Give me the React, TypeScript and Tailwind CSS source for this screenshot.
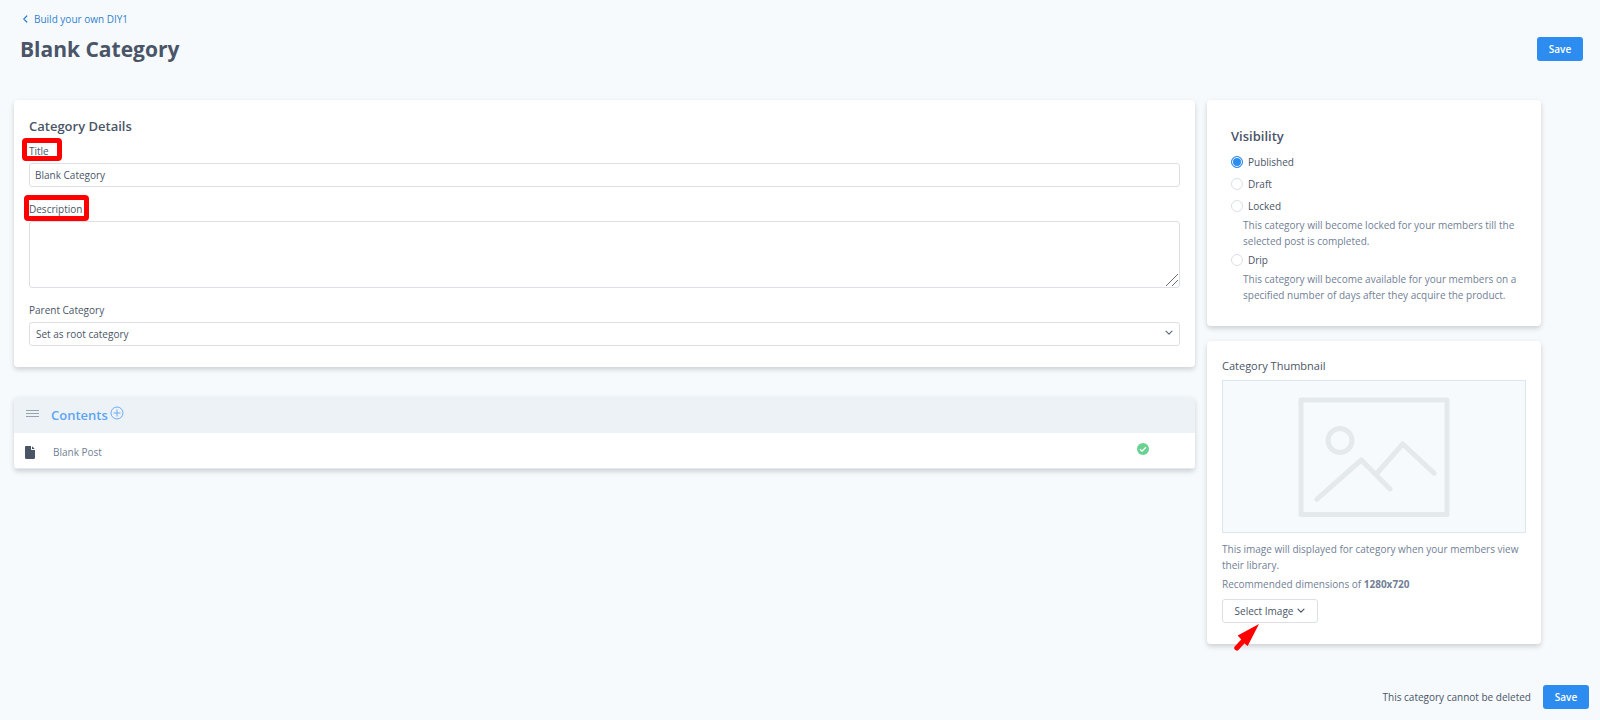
import { useState, type ReactNode } from "react";

const VISIBILITY = [
  { value: "published", label: "Published" },
  { value: "draft", label: "Draft" },
  {
    value: "locked",
    label: "Locked",
    hint: "This category will become locked for your members till the selected post is completed.",
  },
  {
    value: "drip",
    label: "Drip",
    hint: "This category will become available for your members on a specified number of days after they acquire the product.",
  },
];

const SaveButton = () => (
  <button
    type="button"
    className="h-6 w-[46px] rounded-[3px] bg-[#2d8cf0] text-[10px] font-semibold text-white hover:bg-[#2b7fd8]"
  >
    Save
  </button>
);

const Chevron = ({ className }: { className?: string }) => (
  <svg viewBox="0 0 8 6" className={className} fill="none" stroke="currentColor" strokeLinecap="round" strokeLinejoin="round">
    <path d="M1 1.2 4 4.2 7 1.2" strokeWidth={1.2} />
  </svg>
);

const Card = ({ className, children }: { className?: string; children: ReactNode }) => (
  <section
    className={`rounded bg-white shadow-[0_3px_5px_rgba(0,0,0,0.12),0_1px_6px_rgba(0,0,0,0.05)] ${className ?? ""}`}
  >
    {children}
  </section>
);

const CategoryDetails = () => {
  const [title, setTitle] = useState("Blank Category");

  return (
    <Card className="px-[15px] pt-4 pb-[21px]">
      <h2 className="mb-[5px] text-[13px] leading-5 font-semibold">Category Details</h2>

      <div className="mb-3 flex flex-col gap-0.5">
        <label htmlFor="title" className="relative self-start leading-5">
          Title
          <span className="absolute top-[-3px] left-[-7px] h-[23px] w-10 rounded-sm border-5 border-[#ff0000]" />
        </label>
        <input
          id="title"
          value={title}
          onChange={(e) => setTitle(e.target.value)}
          className="h-6 w-full rounded-[3px] border border-[#dcdfe6] bg-white px-[5px] outline-none"
        />
      </div>

      <div className="mb-3 flex flex-col gap-0.5">
        <label htmlFor="description" className="relative self-start leading-5">
          Description
          <span className="absolute top-[-4px] left-[-5px] z-10 h-[26px] w-[65px] rounded-sm border-5 border-[#ff0000]" />
        </label>
        <div className="relative flex">
          <textarea
            id="description"
            className="h-[67px] w-full resize-none rounded-[3px] border border-[#dcdfe6] bg-white px-[5px] outline-none"
          />
          <svg viewBox="0 0 14 14" className="pointer-events-none absolute right-px bottom-px size-[14px]" stroke="#707070" fill="none">
            <path d="M1 13 13 1M7 13l6-6" />
          </svg>
        </div>
      </div>

      <div className="flex flex-col gap-0.5">
        <label htmlFor="parent" className="self-start leading-5">
          Parent Category
        </label>
        <div className="relative">
          <select
            id="parent"
            className="block h-6 w-full appearance-none rounded-[3px] border border-[#dcdfe6] bg-white px-1.5 outline-none"
          >
            <option>Set as root category</option>
          </select>
          <Chevron className="pointer-events-none absolute top-2 right-[7px] h-[6px] w-2 text-[#606b80]" />
        </div>
      </div>
    </Card>
  );
};

const Contents = () => (
  <Card className="overflow-hidden">
    <header className="flex h-9 items-center bg-[#edf2f7] pl-3">
      <svg viewBox="0 0 14 7" className="mb-1 h-[7px] w-[14px]" stroke="#98a1ae">
        <path d="M0 .5h13M0 3.500h13M0 6.500h13" />
      </svg>
      <h2 className="ml-[11px] text-[13px] leading-5 font-semibold text-[#5da5f3]">Contents</h2>
      <button type="button" aria-label="Add content" className="mb-1 ml-0.5 text-[#5da5f3]">
        <svg viewBox="0 0 14 14" className="size-[14px]" fill="none" stroke="currentColor">
          <circle cx="7" cy="7" r="6" strokeWidth={0.9} />
          <path d="M7 3.500v7M3.500 7h7" strokeWidth={0.9} />
        </svg>
      </button>
    </header>
    <div className="flex h-9 items-center border-b border-[#e2e8f0] pr-[46px] pl-[11px]">
      <svg viewBox="0 0 10 13" className="mt-1 h-[13px] w-[10px]" fill="#4a5568">
        <path d="M1.2 0H6v3.2c0 .5.3.8.8.8H10v7.800c0 .7-.5 1.200-1.200 1.200H1.200C.5 13 0 12.500 0 11.800V1.200C0 .5.5 0 1.200 0ZM7 .2 9.800 3H7Z" />
      </svg>
      <a href="#" className="mt-1 ml-[18px] text-[#718096]">
        Blank Post
      </a>
      <svg viewBox="0 0 12 12" className="mb-1 ml-auto size-3" fill="none">
        <circle cx="6" cy="6" r="6" fill="#68d391" />
        <path d="m3 6.200 2.100 2 3.800-4" stroke="#fff" strokeWidth={1.3} />
      </svg>
    </div>
  </Card>
);

const Visibility = () => {
  const [selected, setSelected] = useState("published");

  return (
    <Card className="px-6 pt-[26px] pb-[23px]">
      <fieldset>
        <legend className="mb-[5px] text-[13px] leading-5 font-semibold">Visibility</legend>
        {VISIBILITY.map(({ value, label, hint }) => (
          <div key={value}>
            <label className="flex h-[22px] items-center gap-[5px]">
              <input
                type="radio"
                name="visibility"
                value={value}
                checked={selected === value}
                onChange={() => setSelected(value)}
                className="size-3 appearance-none rounded-full border border-[#dcdfe6] bg-white checked:border-[#2d8cf0] checked:bg-[#2d8cf0] checked:shadow-[inset_0_0_0_1px_#fff]"
              />
              {label}
            </label>
            {hint && <p className="ml-3 leading-4 text-[#718096]">{hint}</p>}
          </div>
        ))}
      </fieldset>
    </Card>
  );
};

const Thumbnail = () => (
  <Card className="px-[15px] pt-[15px] pb-[21px]">
    <h2 className="mb-1 text-[11px] leading-5">Category Thumbnail</h2>
    <div className="flex h-[153px] items-center justify-center border border-[#dde7f0] bg-[#f6fafd]">
      <svg
        viewBox="0 0 152 120"
        className="h-[120px] w-[152px]"
        fill="none"
        stroke="#e4e9ec"
        strokeWidth={5}
        strokeLinecap="round"
        strokeLinejoin="round"
      >
        <rect x="3" y="3" width="146" height="114.500" />
        <circle cx="42" cy="43.500" r="12" />
        <path d="M18.700 102.300 63.300 63 92 92M78.700 76.700 104.700 47l31.600 29.300" />
      </svg>
    </div>
    <p className="mt-2 leading-4 text-[#718096]">
      This image will displayed for category when your members view their library.
    </p>
    <p className="mt-[3px] leading-4 text-[#718096]">
      Recommended dimensions of <strong className="font-bold">1280x720</strong>
    </p>
    <div className="relative mt-[7px] flex">
      <button
        type="button"
        className="flex h-6 w-24 items-center justify-center gap-1 rounded-[3px] border border-[#dcdfe6] bg-white"
      >
        Select Image
        <Chevron className="h-[6px] w-2" />
      </button>
      <svg viewBox="0 0 26 28" className="absolute top-[24px] left-3 h-7 w-[26px]">
        <path d="M25 1 3.700 12.500 6.800 16l3.700 4.500 3.200 2.500Z" fill="#ff0000" />
        <path d="M12 15 2.800 25" stroke="#ff0000" strokeWidth={5} strokeLinecap="round" />
      </svg>
    </div>
  </Card>
);

const App = () => (
  <div className="min-h-screen bg-[#f6fafd] font-['Open_Sans','Noto_Sans',sans-serif] text-[10px] text-[#4a5568]">
    <header className="pt-[9px] pr-[17px] pb-[35px] pl-5">
      <a href="#" className="inline-flex items-center gap-1 align-top leading-5 text-[#3182ce]">
        <Chevron className="h-[6px] w-[10px] rotate-90" />
        Build your own DIY1
      </a>
      <div className="mt-1 flex items-center justify-between">
        <h1 className="text-[21px] leading-8 font-bold">Blank Category</h1>
        <SaveButton />
      </div>
    </header>

    <main className="grid grid-cols-[minmax(0,1fr)_334px] items-start gap-3 pr-[59px] pl-3.5">
      <div className="flex flex-col gap-[30px]">
        <CategoryDetails />
        <Contents />
      </div>
      <aside className="flex flex-col gap-[15px]">
        <Visibility />
        <Thumbnail />
      </aside>
    </main>

    <footer className="mt-[41px] flex items-center justify-end gap-3 pr-[11px] pb-[11px]">
      <span>This category cannot be deleted</span>
      <SaveButton />
    </footer>
  </div>
);

export default App;
